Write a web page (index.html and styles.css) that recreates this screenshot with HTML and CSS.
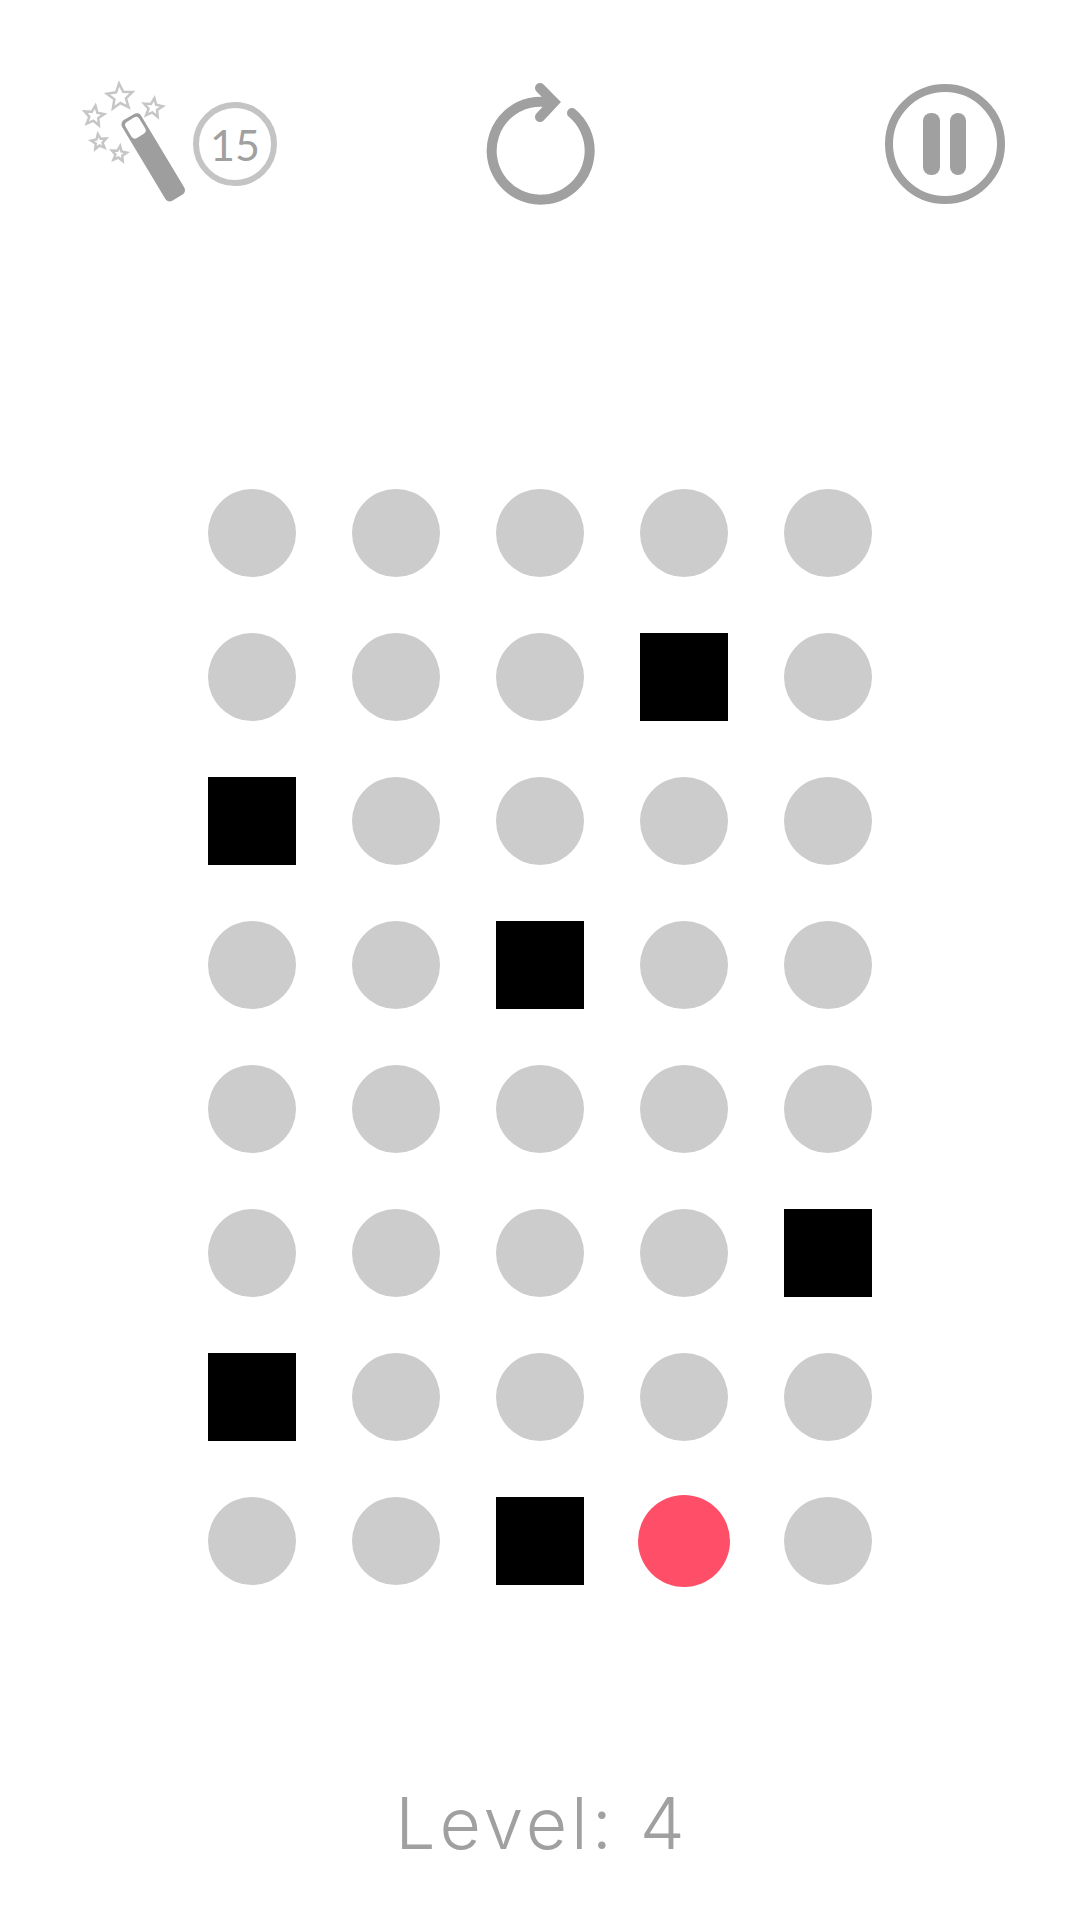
FILE: index.html
```html
<!DOCTYPE html>
<html lang="en">
<head>
    <meta charset="UTF-8">
    <meta name="viewport" content="width=device-width, initial-scale=1.0">
    <title>Level 4</title>
    <link rel="stylesheet" href="styles.css">
</head>
<body>
    <!-- Top bar -->
    <div class="top-bar">
        <div class="hints">
            <svg class="wand" viewBox="80 79 110 130" width="110" height="130">
                <defs>
                    <polygon id="star" class="star" points="0,-1 .265,-.364 .951,-.309 .428,.139 .588,.809 0,.45 -.588,.809 -.428,.139 -.951,-.309 -.265,-.364"/>
                </defs>
                <use href="#star" transform="translate(120 97) rotate(-4) scale(13.5)"/>
                <use href="#star" transform="translate(94 116) rotate(8) scale(10.5)"/>
                <use href="#star" transform="translate(153 108) rotate(8) scale(10)"/>
                <use href="#star" transform="translate(99 142) rotate(-8) scale(8)"/>
                <use href="#star" transform="translate(119 154) rotate(8) scale(8)"/>
                <g transform="translate(129 117) rotate(-31)">
                    <rect class="wand-body" x="-11" y="0" width="22" height="94" rx="5"/>
                    <rect class="wand-cap" x="-8" y="3" width="16" height="19" rx="4"/>
                </g>
            </svg>
            <div class="hint-count">15</div>
        </div>
        <svg class="restart" viewBox="485 82 110 124" width="110" height="124">
            <path d="M572 113 A49 49 0 1 1 552 103"/>
            <path d="M540 88 L554 102 L540 117"/>
        </svg>
        <svg class="pause" viewBox="885 84 120 120" width="120" height="120">
            <circle class="pause-ring" cx="945" cy="144" r="56"/>
            <rect class="pause-bar" x="923" y="113" width="17" height="62" rx="8"/>
            <rect class="pause-bar" x="950" y="113" width="16" height="62" rx="8"/>
        </svg>
    </div>

    <!-- Board -->
    <div class="board">
        <div class="dot"></div><div class="dot"></div><div class="dot"></div><div class="dot"></div><div class="dot"></div>
        <div class="dot"></div><div class="dot"></div><div class="dot"></div><div class="block"></div><div class="dot"></div>
        <div class="block"></div><div class="dot"></div><div class="dot"></div><div class="dot"></div><div class="dot"></div>
        <div class="dot"></div><div class="dot"></div><div class="block"></div><div class="dot"></div><div class="dot"></div>
        <div class="dot"></div><div class="dot"></div><div class="dot"></div><div class="dot"></div><div class="dot"></div>
        <div class="dot"></div><div class="dot"></div><div class="dot"></div><div class="dot"></div><div class="block"></div>
        <div class="block"></div><div class="dot"></div><div class="dot"></div><div class="dot"></div><div class="dot"></div>
        <div class="dot"></div><div class="dot"></div><div class="block"></div><div class="player"></div><div class="dot"></div>
    </div>

    <div class="level">Level: 4</div>
</body>
</html>
```

FILE: styles.css
```css
body {
    margin: 0;
    height: 1920px;
    overflow: hidden;
    background: #fff;
    font-family: Lato, "Liberation Sans", sans-serif;
}

svg {
    display: block;
}

.top-bar {
    display: grid;
    grid-template-columns: 1fr auto 1fr;
    align-items: center;
    height: 130px;
    margin-top: 79px;
    padding: 0 75px;
}

.hints {
    display: flex;
    align-items: center;
    gap: 3px;
    margin-left: 5px;
}

.star {
    fill: none;
    stroke: #c6c6c6;
    stroke-width: 2.5;
    vector-effect: non-scaling-stroke;
}

.wand-body {
    fill: #9e9e9e;
}

.wand-cap {
    fill: #fff;
}

.hint-count {
    box-sizing: border-box;
    width: 84px;
    height: 84px;
    border: 6px solid #c4c4c4;
    border-radius: 50%;
    display: flex;
    align-items: center;
    justify-content: center;
    font-size: 43px;
    color: #a0a0a0;
}

.restart path {
    fill: none;
    stroke: #a0a0a0;
    stroke-width: 10;
    stroke-linecap: round;
}

.pause {
    justify-self: end;
}

.pause-ring {
    fill: none;
    stroke: #a0a0a0;
    stroke-width: 8;
}

.pause-bar {
    fill: #a0a0a0;
}

.board {
    display: grid;
    grid-template-columns: repeat(5, 88px);
    grid-auto-rows: 88px;
    gap: 56px;
    justify-content: center;
    margin-top: 280px;
}

.dot {
    background: #ccc;
    border-radius: 50%;
}

.block {
    background: #000;
}

.player {
    margin: -2px;
    background: #ff4f68;
    border-radius: 50%;
}

.level {
    margin-top: 188px;
    padding-left: 4px;
    text-align: center;
    font-family: Inter, sans-serif;
    font-size: 71.5px;
    line-height: 100px;
    font-weight: 300;
    letter-spacing: 3.9px;
    color: #a0a0a0;
}
```
